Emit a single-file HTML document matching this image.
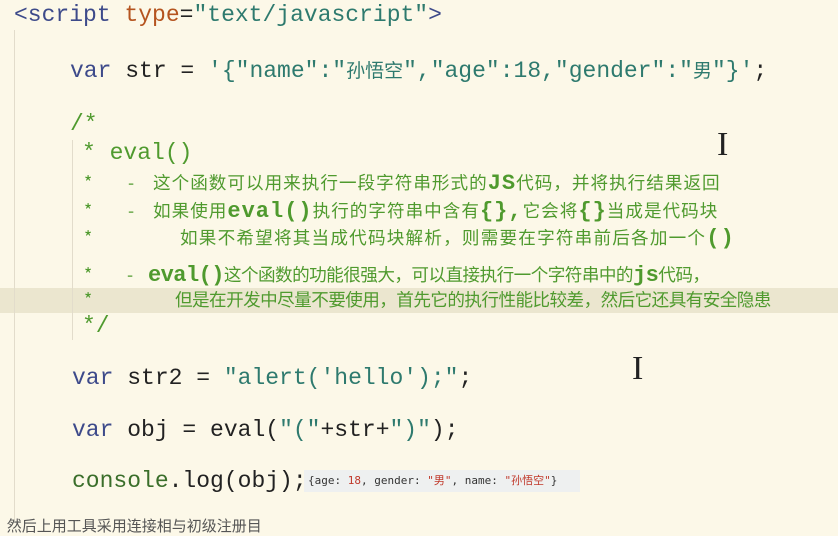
<!DOCTYPE html>
<html><head><meta charset="utf-8"><style>
body{margin:0;width:838px;height:524px;overflow:hidden;background:#fcf8e8;position:relative;font-family:"Liberation Mono","Noto Sans CJK SC",monospace;}
.l{position:absolute;white-space:pre;font-size:23px;line-height:28px;color:#222;}
.k{color:#3d4a8a}.s{color:#2e7a6e}.t{color:#b5541f}.g{color:#4f9a2e}
.c{position:absolute;white-space:pre;font-size:17.6px;line-height:24px;color:#4f9a2e;font-family:"Noto Sans CJK SC",sans-serif;}
.c b{font-family:"Liberation Mono",monospace;font-size:22px;font-weight:bold;}
.hl{position:absolute;left:0;top:288px;width:838px;height:25px;background:#ebe6cf;}
.vl{position:absolute;width:1px;background:#e2dccb;}
.box{position:absolute;left:304px;top:470px;width:276px;height:22px;background:#eef0f0;font-family:"DejaVu Sans Mono","Noto Sans CJK SC",monospace;font-size:11px;line-height:22px;color:#333;padding-left:4px;box-sizing:border-box;}
</style></head><body>
<div class="hl"></div>
<div class="vl" style="left:14px;top:30px;height:490px"></div>
<div class="vl" style="left:72px;top:140px;height:200px"></div>
<div class="l" style="left:14px;top:1px"><span class="k">&lt;script</span> <span class="t">type</span>=<span class="s">"text/javascript"</span><span class="k">&gt;</span></div>
<div class="l" style="left:70px;top:56px"><span class="k">var</span> str = <span class="s">'{"name":"<span style="font-family:'Noto Sans CJK SC';font-size:19px">孙悟空</span>","age":18,"gender":"<span style="font-family:'Noto Sans CJK SC';font-size:19px">男</span>"}'</span>;</div>
<div class="l g" style="left:70px;top:110px">/*</div>
<div class="l g" style="left:82px;top:139px">* eval()</div>
<div class="c" style="left:84px;top:171px">*</div><div class="c" style="left:128px;top:171px">-</div><div class="c" style="left:153px;top:171px;letter-spacing:1px">这个函数可以用来执行一段字符串形式的<b>JS</b>代码，并将执行结果返回</div>
<div class="c" style="left:84px;top:199px">*</div><div class="c" style="left:128px;top:199px">-</div><div class="c" style="left:153px;top:199px;letter-spacing:1px">如果使用<b>eval()</b>执行的字符串中含有<b>{},</b>它会将<b>{}</b>当成是代码块</div>
<div class="c" style="left:84px;top:226px">*</div><div class="c" style="left:180px;top:226px;letter-spacing:1.2px">如果不希望将其当成代码块解析，则需要在字符串前后各加一个<b>()</b></div>
<div class="c" style="left:84px;top:263px">*</div><div class="c" style="left:127px;top:263px">-</div><div class="c" style="left:148px;top:263px;letter-spacing:-0.55px"><b>eval()</b>这个函数的功能很强大，可以直接执行一个字符串中的<b>js</b>代码，</div>
<div class="c" style="left:84px;top:288px">*</div><div class="c" style="left:175px;top:288px;letter-spacing:-0.57px">但是在开发中尽量不要使用，首先它的执行性能比较差，然后它还具有安全隐患</div>
<div class="l g" style="left:82px;top:312px">*/</div>
<div class="l" style="left:72px;top:364px"><span class="k">var</span> str2 = <span class="s">"alert('hello');"</span>;</div>
<div class="l" style="left:72px;top:416px"><span class="k">var</span> obj = eval(<span class="s">"("</span>+str+<span class="s">")"</span>);</div>
<div class="l" style="left:72px;top:467px"><span style="color:#3a6e2a">console</span>.log(obj);</div>
<div class="box">{age: <span style="color:#c0392b">18</span>, gender: <span style="color:#c0392b">"男"</span>, name: <span style="color:#c0392b">"孙悟空"</span>}</div>
<div style="position:absolute;left:717px;top:126px;font-size:34px;font-family:'Liberation Serif';color:#222">I</div>
<div style="position:absolute;left:632px;top:350px;font-size:34px;font-family:'Liberation Serif';color:#222">I</div>
<div style="position:absolute;left:0;top:515px;font-size:15px;color:#555;font-family:'Noto Sans CJK SC';white-space:pre">  然后上用工具采用连接相与初级注册目</div>
</body></html>
